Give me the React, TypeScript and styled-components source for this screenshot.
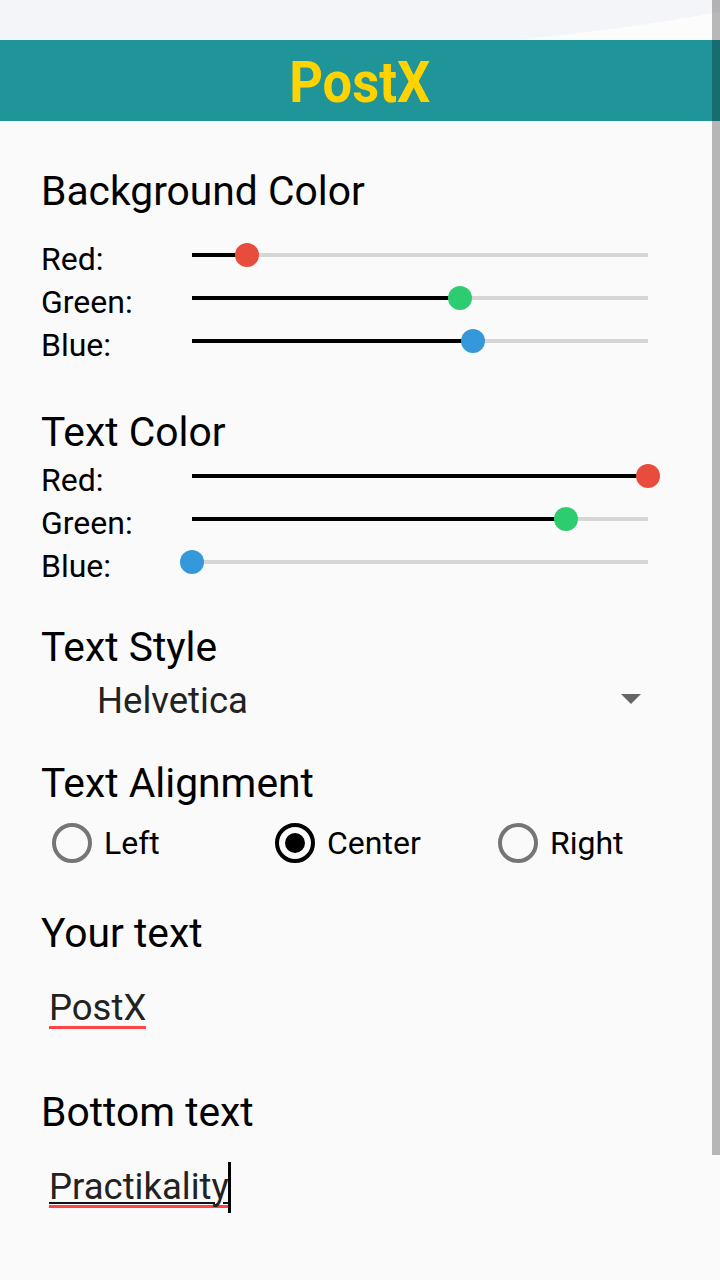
import React from "react";
import styled, { createGlobalStyle } from "styled-components";

const Global = createGlobalStyle`
  html, body { margin: 0; padding: 0; }
  body {
    background: #fafafa;
    font-family: Roboto, "Noto Sans", sans-serif;
    width: 720px;
    height: 1280px;
    overflow: hidden;
  }
`;

const Screen = styled.div`
  position: relative;
  width: 720px;
  height: 1280px;
  background: #fafafa;
  display: flex;
  flex-direction: column;
`;

const StatusArea = styled.div`
  height: 40px;
  background: #f4f5f9;
  display: flex;
  svg { display: block; }
`;

const Header = styled.header`
  height: 81px;
  background: #1f9599;
  display: flex;
  align-items: center;
  justify-content: center;
`;

const AppTitle = styled.h1`
  margin: 0;
  font-family: Roboto, sans-serif;
  font-weight: 700;
  font-size: 57px;
  line-height: 81px;
  color: #ffd300;
  display: inline-block;
  transform: scaleX(0.92) translateY(2px);
`;

const Content = styled.main`
  padding-left: 41px;
  display: flex;
  flex-direction: column;
`;

const SectionTitle = styled.h2<{ $top: number }>`
  margin: ${(p) => p.$top}px 0 0 0;
  font-weight: 400;
  font-size: 40.8px;
  line-height: 48px;
  color: #000;
`;

const SliderList = styled.div<{ $top: number }>`
  margin-top: ${(p) => p.$top}px;
  display: flex;
  flex-direction: column;
`;

const SliderRow = styled.div`
  display: grid;
  grid-template-columns: 151px 456px;
  height: 43px;
`;

const RowLabel = styled.span`
  font-size: 32px;
  line-height: 43px;
  color: #000;
`;

const Track = styled.div`
  position: relative;
  margin-top: 14.5px;
  height: 4px;
  background: #d6d6d6;
`;

const Fill = styled.div`
  height: 4px;
  background: #000;
`;

const Thumb = styled.div<{ $color: string }>`
  position: absolute;
  top: -10px;
  width: 24px;
  height: 24px;
  border-radius: 50%;
  background: ${(p) => p.$color};
`;

const Dropdown = styled.div`
  display: flex;
  align-items: center;
  justify-content: space-between;
  width: 600px;
  height: 60px;
  padding-left: 56px;
  box-sizing: border-box;
`;

const DropdownValue = styled.span`
  font-size: 36.5px;
  line-height: 60px;
  color: #222;
`;

const Caret = styled.span`
  width: 0;
  height: 0;
  border-left: 10px solid transparent;
  border-right: 10px solid transparent;
  border-top: 10px solid #666;
  margin-top: -4px;
`;

const RadioGroup = styled.div`
  margin-top: 8px;
  display: grid;
  grid-template-columns: repeat(3, 223px);
  height: 56px;
`;

const RadioOption = styled.label`
  display: flex;
  align-items: center;
  gap: 12px;
  padding-left: 11px;
`;

const RadioCircle = styled.span<{ $checked: boolean }>`
  width: 40px;
  height: 40px;
  box-sizing: border-box;
  border-radius: 50%;
  border: 4px solid ${(p) => (p.$checked ? "#000" : "#757575")};
  display: flex;
  align-items: center;
  justify-content: center;
  &::after {
    content: "";
    width: 20px;
    height: 20px;
    border-radius: 50%;
    background: ${(p) => (p.$checked ? "#000" : "transparent")};
  }
`;

const RadioText = styled.span`
  font-size: 32px;
  line-height: 56px;
  color: #000;
`;

const InputField = styled.div<{ $top: number }>`
  margin-top: ${(p) => p.$top}px;
  padding-left: 8px;
  height: 60px;
  font-size: 36.5px;
  line-height: 60px;
  color: #222;
  display: flex;
  align-items: center;
`;

const Word = styled.span<{ $composing?: boolean }>`
  background: linear-gradient(#ff4444, #ff4444) no-repeat left bottom / 100% 3px;
  text-decoration: ${(p) => (p.$composing ? "underline" : "none")};
  text-decoration-thickness: 2px;
  text-underline-offset: 3px;
  text-decoration-color: #111;
  line-height: normal;
`;

const TextCursor = styled.span`
  width: 3px;
  height: 51px;
  background: #000;
  margin-left: -1px;
  margin-top: 2px;
`;

const Scrollbar = styled.div`
  position: absolute;
  top: 0;
  right: 0;
  width: 8px;
  height: 1155px;
  background: rgba(0, 0, 0, 0.27);
`;

type SliderSpec = { label: string; value: number; color: string };

const ColorSlider = ({ label, value, color }: SliderSpec) => {
  const w = (value / 255) * 456;
  return (
    <SliderRow>
      <RowLabel>{label}</RowLabel>
      <Track>
        <Fill style={{ width: `${w}px` }} />
        <Thumb $color={color} style={{ left: `${w - 12}px` }} />
      </Track>
    </SliderRow>
  );
};

const RED = "#e74c3c";
const GREEN = "#2ecc71";
const BLUE = "#3498db";

const bg: SliderSpec[] = [
  { label: "Red:", value: 31, color: RED },
  { label: "Green:", value: 150, color: GREEN },
  { label: "Blue:", value: 157, color: BLUE },
];

const fg: SliderSpec[] = [
  { label: "Red:", value: 255, color: RED },
  { label: "Green:", value: 209, color: GREEN },
  { label: "Blue:", value: 0, color: BLUE },
];

export default function App() {
  return (
    <>
      <Global />
      <Screen>
        <StatusArea>
          <svg width="720" height="40" viewBox="0 0 720 40">
            <path d="M515 40 Q620 30 720 12 L720 40 Z" fill="#fcfcfc" />
          </svg>
        </StatusArea>
        <Header>
          <AppTitle>PostX</AppTitle>
        </Header>
        <Content>
          <SectionTitle $top={46}>Background Color</SectionTitle>
          <SliderList $top={23}>
            {bg.map((s) => (
              <ColorSlider key={s.label} {...s} />
            ))}
          </SliderList>

          <SectionTitle $top={41}>Text Color</SectionTitle>
          <SliderList $top={3}>
            {fg.map((s) => (
              <ColorSlider key={s.label} {...s} />
            ))}
          </SliderList>

          <SectionTitle $top={35}>Text Style</SectionTitle>
          <Dropdown>
            <DropdownValue>Helvetica</DropdownValue>
            <Caret />
          </Dropdown>

          <SectionTitle $top={28}>Text Alignment</SectionTitle>
          <RadioGroup>
            {["Left", "Center", "Right"].map((o) => (
              <RadioOption key={o}>
                <RadioCircle $checked={o === "Center"} />
                <RadioText>{o}</RadioText>
              </RadioOption>
            ))}
          </RadioGroup>

          <SectionTitle $top={38}>Your text</SectionTitle>
          <InputField $top={20}>
            <Word>PostX</Word>
          </InputField>

          <SectionTitle $top={51}>Bottom text</SectionTitle>
          <InputField $top={20}>
            <Word $composing>Practikality</Word>
            <TextCursor />
          </InputField>
        </Content>
        <Scrollbar />
      </Screen>
    </>
  );
}
